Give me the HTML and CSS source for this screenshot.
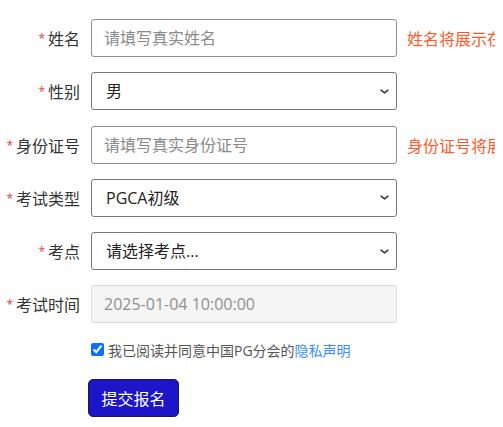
FILE: index.html
```html
<!DOCTYPE html>
<html lang="zh-CN">
<head>
<meta charset="utf-8">
<link rel="stylesheet" href="styles.css">
</head>
<body>
<form class="form">
  <div class="row">
    <label class="label"><span class="star">*</span>姓名</label>
    <input class="field" type="text" placeholder="请填写真实姓名">
    <span class="hint">姓名将展示在证书上</span>
  </div>
  <div class="row">
    <label class="label"><span class="star">*</span>性别</label>
    <select class="field select"><option>男</option><option>女</option></select>
  </div>
  <div class="row">
    <label class="label"><span class="star">*</span>身份证号</label>
    <input class="field" type="text" placeholder="请填写真实身份证号">
    <span class="hint">身份证号将展示在证书上</span>
  </div>
  <div class="row">
    <label class="label"><span class="star">*</span>考试类型</label>
    <select class="field select"><option>PGCA初级</option></select>
  </div>
  <div class="row">
    <label class="label"><span class="star">*</span>考点</label>
    <select class="field select"><option>请选择考点...</option></select>
  </div>
  <div class="row">
    <label class="label"><span class="star">*</span>考试时间</label>
    <input class="field" type="text" value="2025-01-04 10:00:00" disabled>
  </div>
  <div class="agree">
    <input class="check" type="checkbox" checked>
    <span>我已阅读并同意中国PG分会的<a class="link" href="#">隐私声明</a></span>
  </div>
  <div class="actions">
    <button class="submit" type="button">提交报名</button>
  </div>
</form>
</body>
</html>
```
FILE: styles.css
```css
html, body {
  margin: 0;
  padding: 0;
  background: #fff;
}
body {
  font-family: "Open Sans", "Noto Sans CJK SC", sans-serif;
  color: #333;
  overflow: hidden;
}
.form {
  width: 495px;
  overflow: hidden;
  padding-top: 19px;
  display: flex;
  flex-direction: column;
}
.row {
  display: flex;
  align-items: center;
  height: 38px;
  margin-bottom: 15.3px;
  white-space: nowrap;
}
.label {
  width: 80px;
  flex: none;
  text-align: right;
  font-size: 16px;
  color: #333;
  margin-right: 11px;
}
.star {
  color: #e4393c;
  font-size: 12px;
  margin-right: 3px;
  vertical-align: 2px;
}
.field {
  box-sizing: border-box;
  width: 306px;
  height: 38px;
  flex: none;
  border: 1px solid #8f8f8f;
  border-radius: 3px;
  padding: 0 12px;
  font-family: "Open Sans", "Noto Sans CJK SC", sans-serif;
  font-size: 16px;
  color: #222;
  background: #fff;
  outline: none;
}
.field::placeholder {
  color: #8a8a8a;
}
.field:disabled {
  background: #f5f5f5;
  border-color: #dcdcdc;
  color: #909090;
}
.select {
  appearance: none;
  -webkit-appearance: none;
  padding-left: 14px;
  border-color: #767676;
  background-image: url("data:image/svg+xml,%3Csvg xmlns='http://www.w3.org/2000/svg' viewBox='0 0 16 16'%3E%3Cpath fill='none' stroke='%23343a40' stroke-linecap='round' stroke-linejoin='round' stroke-width='2.2' d='M3 6l5 4 5-4'/%3E%3C/svg%3E");
  background-repeat: no-repeat;
  background-position: right 5px center;
  background-size: 13px 11px;
}
.hint {
  margin-left: 10px;
  font-size: 16px;
  color: #ff5a2b;
}
.agree {
  display: flex;
  align-items: center;
  margin-left: 91px;
  margin-top: 1px;
  font-size: 14px;
  color: #555;
  height: 20px;
}
.check {
  width: 13px;
  height: 13px;
  margin: 0 4px 0 0;
  accent-color: #0d6efd;
}
.link {
  color: #3a8ef6;
  text-decoration: none;
}
.actions {
  margin-left: 88px;
  margin-top: 19px;
}
.submit {
  width: 91px;
  height: 38px;
  background: #1c16c8;
  border: 1px solid #1a1a40;
  border-radius: 5px;
  color: #fff;
  font-family: "Open Sans", "Noto Sans CJK SC", sans-serif;
  font-size: 16px;
  padding: 0;
}
```
